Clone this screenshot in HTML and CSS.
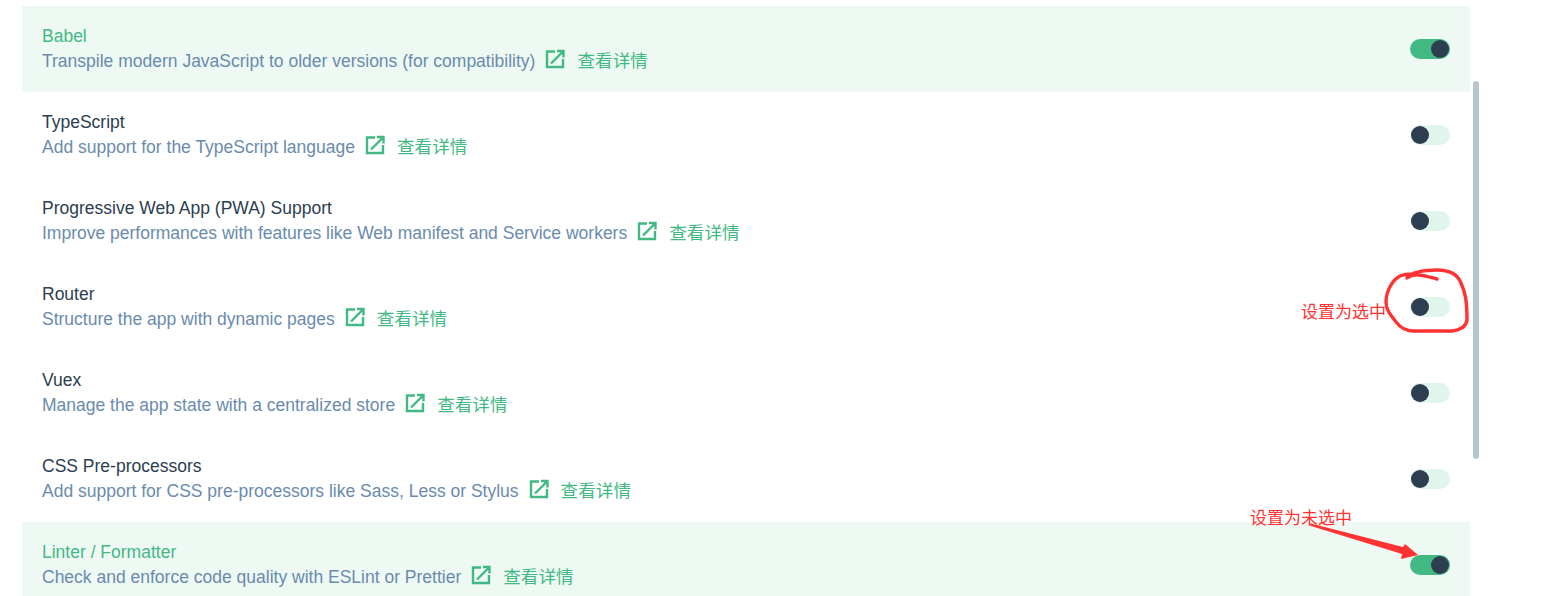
FILE: index.html
```html
<!DOCTYPE html>
<html lang="en">
<head>
    <meta charset="UTF-8">
    <title>Features</title>
    <link rel="stylesheet" href="styles.css">
</head>
<body>
    <svg width="0" height="0" class="icon-defs">
        <symbol id="open-icon" viewBox="0 0 20 20">
            <path d="M10 2.500H2v15.500h16v-8M6 14.500L18 2.500M12 2h6.500v6.500" fill="none" stroke="currentColor" stroke-width="2.400"/>
        </symbol>
    </svg>

    <div class="feature-list">
        <div class="feature selected">
            <div class="info">
                <div class="name">Babel</div>
                <div class="desc"><span>Transpile modern JavaScript to older versions (for compatibility)</span><svg class="open-icon"><use href="#open-icon"/></svg><a class="more">查看详情</a></div>
            </div>
            <div class="toggle"><span class="knob"></span></div>
        </div>
        <div class="feature">
            <div class="info">
                <div class="name">TypeScript</div>
                <div class="desc"><span>Add support for the TypeScript language</span><svg class="open-icon"><use href="#open-icon"/></svg><a class="more">查看详情</a></div>
            </div>
            <div class="toggle"><span class="knob"></span></div>
        </div>
        <div class="feature">
            <div class="info">
                <div class="name">Progressive Web App (PWA) Support</div>
                <div class="desc"><span>Improve performances with features like Web manifest and Service workers</span><svg class="open-icon"><use href="#open-icon"/></svg><a class="more">查看详情</a></div>
            </div>
            <div class="toggle"><span class="knob"></span></div>
        </div>
        <div class="feature">
            <div class="info">
                <div class="name">Router</div>
                <div class="desc"><span>Structure the app with dynamic pages</span><svg class="open-icon"><use href="#open-icon"/></svg><a class="more">查看详情</a></div>
            </div>
            <div class="toggle"><span class="knob"></span></div>
        </div>
        <div class="feature">
            <div class="info">
                <div class="name">Vuex</div>
                <div class="desc"><span>Manage the app state with a centralized store</span><svg class="open-icon"><use href="#open-icon"/></svg><a class="more">查看详情</a></div>
            </div>
            <div class="toggle"><span class="knob"></span></div>
        </div>
        <div class="feature">
            <div class="info">
                <div class="name">CSS Pre-processors</div>
                <div class="desc"><span>Add support for CSS pre-processors like Sass, Less or Stylus</span><svg class="open-icon"><use href="#open-icon"/></svg><a class="more">查看详情</a></div>
            </div>
            <div class="toggle"><span class="knob"></span></div>
        </div>
        <div class="feature selected">
            <div class="info">
                <div class="name">Linter / Formatter</div>
                <div class="desc"><span>Check and enforce code quality with ESLint or Prettier</span><svg class="open-icon"><use href="#open-icon"/></svg><a class="more">查看详情</a></div>
            </div>
            <div class="toggle"><span class="knob"></span></div>
        </div>
    </div>

    <div class="scrollbar"></div>

    <!-- hand-drawn notes on top of the screenshot -->
    <span class="note note-on">设置为选中</span>
    <span class="note note-off">设置为未选中</span>
    <svg class="marks" width="1568" height="596" viewBox="0 0 1568 596">
        <path d="M1437 279 C1425 276 1415 272 1407 278 C1412 272 1423 270 1437 270 C1450 270 1458 275 1461 283 C1465 292 1467 300 1467 320 C1466 327 1460 330 1452 331 L1413 331 C1405 331 1400 327 1396 322 C1390 314 1386 310 1386 302 C1386 292 1392 280 1400 276 C1405 274 1410 274 1413 274" fill="none" stroke="#f33" stroke-width="3.400" stroke-linejoin="round" stroke-linecap="round"/>
        <path d="M1309 523 L1403 547 L1405 544 L1418 555 L1401 559 L1402 554 L1311 526 Z" fill="#f33"/>
    </svg>
</body>
</html>
```
FILE: styles.css
```css
html, body {
    height: 100%;
}

body {
    margin: 0;
    background-color: white;
    overflow: hidden;
    font-family: "Liberation Sans", "Noto Sans CJK SC", sans-serif;
}

.icon-defs {
    display: block;
    height: 0;
}

.feature-list {
    width: 1448px;
    margin: 6px 0 0 22px;
}

.feature {
    display: flex;
    align-items: center;
    justify-content: space-between;
    height: 86px;
    padding: 0 20px;
    box-sizing: border-box;
}

.feature.selected {
    background-color: #eef9f4;
}

.info {
    margin-bottom: 1px;
}

.name {
    font-size: 17.5px;
    line-height: 25px;
    color: #2c3e50;
}

.selected .name {
    color: #42b983;
}

.desc {
    display: flex;
    align-items: center;
    margin-top: -1px;
    font-size: 17.5px;
    line-height: 26px;
    color: #6a8bad;
    white-space: nowrap;
}

.open-icon {
    width: 20px;
    height: 20px;
    margin: 0 12px 0 10px;
    color: #42b983;
    position: relative;
    top: -2px;
}

.more {
    font-size: 17.6px;
    color: #42b983;
}

.toggle {
    display: flex;
    align-items: center;
    width: 40px;
    height: 20px;
    border-radius: 10px;
    background-color: #e0f6ec;
}

.knob {
    width: 18px;
    height: 18px;
    margin-left: 1px;
    border-radius: 50%;
    background-color: #2c3e50;
}

.selected .toggle {
    justify-content: flex-end;
    background-color: #42b983;
}

.selected .knob {
    margin: 0 1px 0 0;
}

.scrollbar {
    position: absolute;
    left: 1473px;
    top: 81px;
    width: 6px;
    height: 378px;
    border-radius: 3px;
    background-color: #b5c6d1;
}

.note {
    position: absolute;
    font-size: 17px;
    line-height: 20px;
    color: #f33;
    white-space: nowrap;
}

.note-on {
    left: 1301px;
    top: 303px;
}

.note-off {
    left: 1250px;
    top: 509px;
}

.marks {
    position: absolute;
    left: 0;
    top: 0;
}
```
